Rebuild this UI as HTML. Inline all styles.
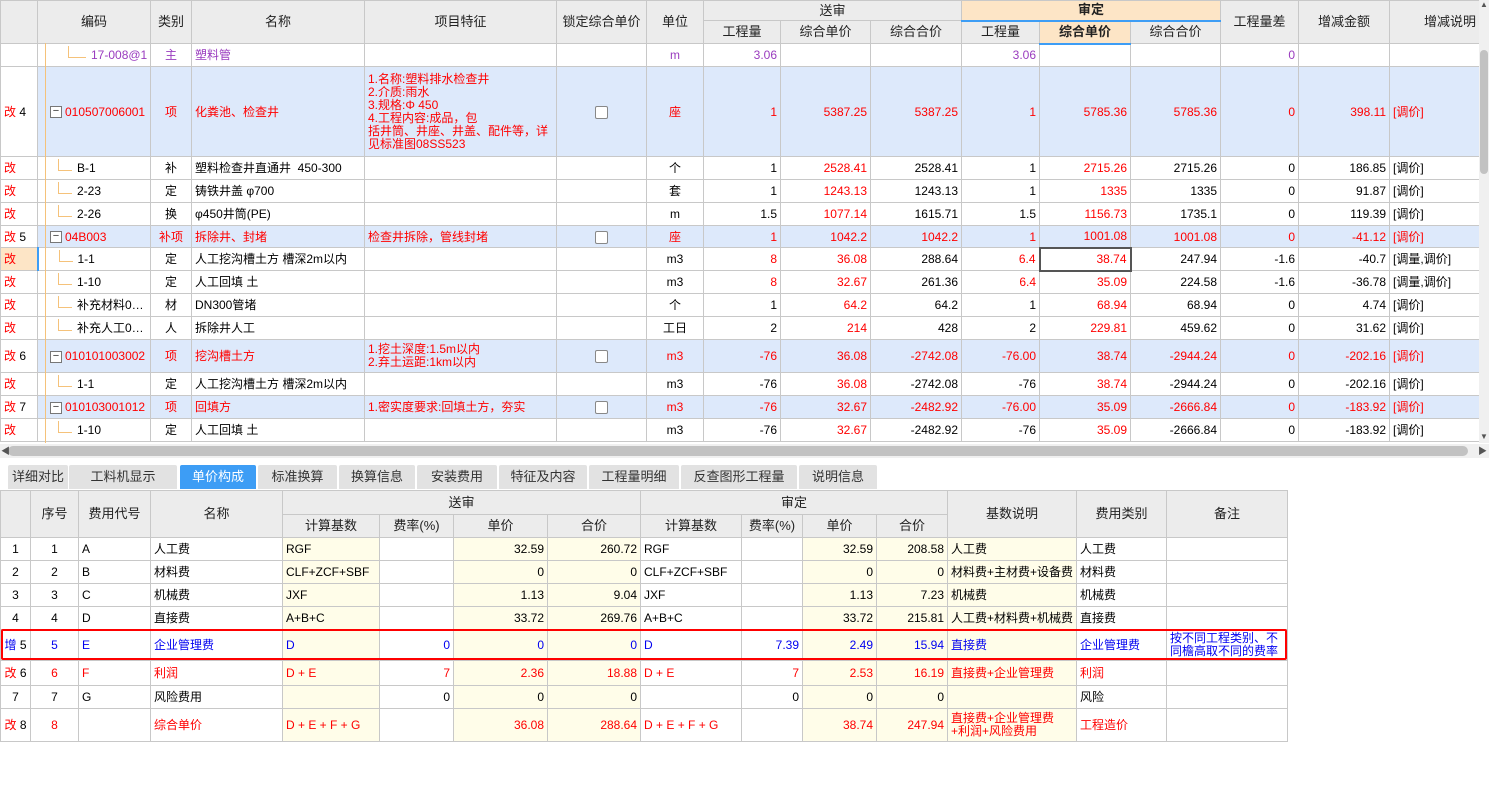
<!DOCTYPE html>
<html><head><meta charset="utf-8"><style>
*{box-sizing:border-box;margin:0;padding:0}
body{width:1489px;height:807px;background:#fff;font-family:"Liberation Sans","Noto Sans CJK SC",sans-serif;font-size:12px;color:#000;position:relative;overflow:hidden}
table{border-collapse:collapse;table-layout:fixed;position:absolute;left:0}
td{border:1px solid #c8c8c8;white-space:nowrap;overflow:hidden;padding:0 3px;line-height:14px}
.h td{background:#ececec;text-align:center;color:#222;font-size:13px}
.r{text-align:right}.c{text-align:center}
.red{color:#f00}.pur{color:#9a3cbf}.blu{color:#0000f0}
.sel td{background:#dde9fb}
.sel td.w{background:#fff}
.mn{display:inline-block;width:12px;height:12px;border:1px solid #777;line-height:9px;text-align:center;font-size:11px;color:#333;background:#fff;vertical-align:middle;margin-right:3px;margin-left:9px}
.cb{display:inline-block;width:13px;height:13px;border:1px solid #888;border-radius:2px;background:#fff;vertical-align:middle}
.ml{white-space:normal;line-height:13px;font-size:12px}
.y{background:#fffde9}
.tab{position:absolute;top:465px;height:24px;background:#e2e2e2;color:#333;font-size:13px;text-align:center;line-height:24px;border-radius:2px 2px 0 0}
.t{display:inline-block;width:14px;height:12px;border-left:1px solid #f5c27a;border-bottom:1px solid #f5c27a;vertical-align:top;margin:-2px 5px 0 17px}
.tp{margin-left:27px;width:18px}
</style></head><body>

<table style="top:0;width:1479px">
<colgroup><col style="width:37px"><col style="width:113px"><col style="width:41px"><col style="width:173px"><col style="width:192px"><col style="width:90px"><col style="width:57px"><col style="width:77px"><col style="width:90px"><col style="width:91px"><col style="width:78px"><col style="width:91px"><col style="width:90px"><col style="width:78px"><col style="width:91px"><col style="width:90px"></colgroup>
<tr class="h" style="height:20px"><td rowspan="2"></td><td rowspan="2">编码</td><td rowspan="2">类别</td><td rowspan="2">名称</td><td rowspan="2">项目特征</td><td rowspan="2">锁定综合单价</td><td rowspan="2">单位</td><td colspan="3">送审</td><td colspan="3" style="background:#fde5c6;font-weight:bold;border-bottom:2px solid #3d9df5">审定</td><td rowspan="2">工程量差</td><td rowspan="2">增减金额</td><td rowspan="2" style="text-align:right">增减说明</td></tr>
<tr class="h" style="height:23px"><td>工程量</td><td>综合单价</td><td>综合合价</td><td>工程量</td><td style="background:#fde5c6;font-weight:bold;border-bottom:2px solid #3d9df5">综合单价</td><td>综合合价</td></tr>
<tr style="height:23px" class="pur"><td></td><td><span class="t tp"></span>17-008@1</td><td class="c">主</td><td>塑料管</td><td></td><td></td><td class="c">m</td><td class="r">3.06</td><td></td><td></td><td class="r">3.06</td><td></td><td></td><td class="r">0</td><td></td><td></td></tr>
<tr style="height:90px" class="sel red"><td class="w">改 <span style="color:#000">4</span></td><td><span class="mn">−</span>010507006001</td><td class="c">项</td><td>化粪池、检查井</td><td class="ml">1.名称:塑料排水检查井<br>2.介质:雨水<br>3.规格:Φ 450<br>4.工程内容:成品，包<br>括井筒、井座、井盖、配件等，详<br>见标准图08SS523</td><td class="c"><span class="cb"></span></td><td class="c">座</td><td class="r">1</td><td class="r">5387.25</td><td class="r">5387.25</td><td class="r">1</td><td class="r">5785.36</td><td class="r">5785.36</td><td class="r">0</td><td class="r">398.11</td><td>[调价]</td></tr>
<tr style="height:23px"><td class="red">改</td><td><span class="t"></span>B-1</td><td class="c">补</td><td>塑料检查井直通井&nbsp; 450-300</td><td></td><td></td><td class="c">个</td><td class="r">1</td><td class="r red">2528.41</td><td class="r">2528.41</td><td class="r">1</td><td class="r red">2715.26</td><td class="r">2715.26</td><td class="r">0</td><td class="r">186.85</td><td>[调价]</td></tr>
<tr style="height:23px"><td class="red">改</td><td><span class="t"></span>2-23</td><td class="c">定</td><td>铸铁井盖 φ700</td><td></td><td></td><td class="c">套</td><td class="r">1</td><td class="r red">1243.13</td><td class="r">1243.13</td><td class="r">1</td><td class="r red">1335</td><td class="r">1335</td><td class="r">0</td><td class="r">91.87</td><td>[调价]</td></tr>
<tr style="height:23px"><td class="red">改</td><td><span class="t"></span>2-26</td><td class="c">换</td><td>φ450井筒(PE)</td><td></td><td></td><td class="c">m</td><td class="r">1.5</td><td class="r red">1077.14</td><td class="r">1615.71</td><td class="r">1.5</td><td class="r red">1156.73</td><td class="r">1735.1</td><td class="r">0</td><td class="r">119.39</td><td>[调价]</td></tr>
<tr style="height:22px" class="sel red"><td class="w">改 <span style="color:#000">5</span></td><td><span class="mn">−</span>04B003</td><td class="c">补项</td><td>拆除井、封堵</td><td>检查井拆除，管线封堵</td><td class="c"><span class="cb"></span></td><td class="c">座</td><td class="r">1</td><td class="r">1042.2</td><td class="r">1042.2</td><td class="r">1</td><td class="r">1001.08</td><td class="r">1001.08</td><td class="r">0</td><td class="r">-41.12</td><td>[调价]</td></tr>
<tr style="height:23px"><td class="red" style="background:#fde5c6;border-right:2px solid #3d9df5">改</td><td><span class="t"></span>1-1</td><td class="c">定</td><td>人工挖沟槽土方 槽深2m以内</td><td></td><td></td><td class="c">m3</td><td class="r red">8</td><td class="r red">36.08</td><td class="r">288.64</td><td class="r red">6.4</td><td class="r red" style="border:2px solid #555">38.74</td><td class="r">247.94</td><td class="r">-1.6</td><td class="r">-40.7</td><td>[调量,调价]</td></tr>
<tr style="height:23px"><td class="red">改</td><td><span class="t"></span>1-10</td><td class="c">定</td><td>人工回填 土</td><td></td><td></td><td class="c">m3</td><td class="r red">8</td><td class="r red">32.67</td><td class="r">261.36</td><td class="r red">6.4</td><td class="r red">35.09</td><td class="r">224.58</td><td class="r">-1.6</td><td class="r">-36.78</td><td>[调量,调价]</td></tr>
<tr style="height:23px"><td class="red">改</td><td><span class="t"></span>补充材料0…</td><td class="c">材</td><td>DN300管堵</td><td></td><td></td><td class="c">个</td><td class="r">1</td><td class="r red">64.2</td><td class="r">64.2</td><td class="r">1</td><td class="r red">68.94</td><td class="r">68.94</td><td class="r">0</td><td class="r">4.74</td><td>[调价]</td></tr>
<tr style="height:23px"><td class="red">改</td><td><span class="t"></span>补充人工0…</td><td class="c">人</td><td>拆除井人工</td><td></td><td></td><td class="c">工日</td><td class="r">2</td><td class="r red">214</td><td class="r">428</td><td class="r">2</td><td class="r red">229.81</td><td class="r">459.62</td><td class="r">0</td><td class="r">31.62</td><td>[调价]</td></tr>
<tr style="height:33px" class="sel red"><td class="w">改 <span style="color:#000">6</span></td><td><span class="mn">−</span>010101003002</td><td class="c">项</td><td>挖沟槽土方</td><td class="ml">1.挖土深度:1.5m以内<br>2.弃土运距:1km以内</td><td class="c"><span class="cb"></span></td><td class="c">m3</td><td class="r">-76</td><td class="r">36.08</td><td class="r">-2742.08</td><td class="r">-76.00</td><td class="r">38.74</td><td class="r">-2944.24</td><td class="r">0</td><td class="r">-202.16</td><td>[调价]</td></tr>
<tr style="height:23px"><td class="red">改</td><td><span class="t"></span>1-1</td><td class="c">定</td><td>人工挖沟槽土方 槽深2m以内</td><td></td><td></td><td class="c">m3</td><td class="r">-76</td><td class="r red">36.08</td><td class="r">-2742.08</td><td class="r">-76</td><td class="r red">38.74</td><td class="r">-2944.24</td><td class="r">0</td><td class="r">-202.16</td><td>[调价]</td></tr>
<tr style="height:23px" class="sel red"><td class="w">改 <span style="color:#000">7</span></td><td><span class="mn">−</span>010103001012</td><td class="c">项</td><td>回填方</td><td>1.密实度要求:回填土方，夯实</td><td class="c"><span class="cb"></span></td><td class="c">m3</td><td class="r">-76</td><td class="r">32.67</td><td class="r">-2482.92</td><td class="r">-76.00</td><td class="r">35.09</td><td class="r">-2666.84</td><td class="r">0</td><td class="r">-183.92</td><td>[调价]</td></tr>
<tr style="height:23px"><td class="red">改</td><td><span class="t"></span>1-10</td><td class="c">定</td><td>人工回填 土</td><td></td><td></td><td class="c">m3</td><td class="r">-76</td><td class="r red">32.67</td><td class="r">-2482.92</td><td class="r">-76</td><td class="r red">35.09</td><td class="r">-2666.84</td><td class="r">0</td><td class="r">-183.92</td><td>[调价]</td></tr>
</table>
<div style="position:absolute;left:45px;top:43px;width:1px;height:400px;background:#f5c27a"></div>
<div style="position:absolute;left:1479px;top:0;width:10px;height:443px;background:#f0f0f0"></div>
<div style="position:absolute;left:1480px;top:50px;width:8px;height:124px;background:#c2c2c2;border-radius:4px"></div>
<div style="position:absolute;left:1480px;top:0;font-size:8px;color:#555">▲</div>
<div style="position:absolute;left:1480px;top:432px;font-size:8px;color:#555">▼</div>
<div style="position:absolute;left:0;top:444px;width:1489px;height:14px;background:#f0f0f0"></div>
<div style="position:absolute;left:8px;top:446px;width:1460px;height:10px;background:#c2c2c2;border-radius:5px"></div>
<div style="position:absolute;left:1px;top:444px;font-size:9px;color:#555">◀</div>
<div style="position:absolute;left:1478px;top:444px;font-size:9px;color:#555">▶</div>

<div class="tab" style="left:8px;width:60px">详细对比</div>
<div class="tab" style="left:69px;width:108px">工料机显示</div>
<div class="tab" style="left:180px;width:76px;background:#3d9df5;color:#fff">单价构成</div>
<div class="tab" style="left:258px;width:79px">标准换算</div>
<div class="tab" style="left:339px;width:76px">换算信息</div>
<div class="tab" style="left:417px;width:80px">安装费用</div>
<div class="tab" style="left:499px;width:88px">特征及内容</div>
<div class="tab" style="left:589px;width:90px">工程量明细</div>
<div class="tab" style="left:681px;width:116px">反查图形工程量</div>
<div class="tab" style="left:799px;width:78px">说明信息</div>

<table style="top:490px;width:1287px">
<colgroup><col style="width:30px"><col style="width:48px"><col style="width:72px"><col style="width:132px"><col style="width:97px"><col style="width:74px"><col style="width:94px"><col style="width:93px"><col style="width:101px"><col style="width:61px"><col style="width:74px"><col style="width:71px"><col style="width:129px"><col style="width:90px"><col style="width:121px"></colgroup>
<tr class="h" style="height:24px"><td rowspan="2"></td><td rowspan="2">序号</td><td rowspan="2">费用代号</td><td rowspan="2">名称</td><td colspan="4">送审</td><td colspan="4">审定</td><td rowspan="2">基数说明</td><td rowspan="2">费用类别</td><td rowspan="2">备注</td></tr>
<tr class="h" style="height:23px"><td>计算基数</td><td>费率(%)</td><td>单价</td><td>合价</td><td>计算基数</td><td>费率(%)</td><td>单价</td><td>合价</td></tr>
<tr style="height:23px"><td class="c">1</td><td class="c">1</td><td>A</td><td>人工费</td><td class="y">RGF</td><td></td><td class="r y">32.59</td><td class="r y">260.72</td><td>RGF</td><td></td><td class="r y">32.59</td><td class="r y">208.58</td><td class="y">人工费</td><td>人工费</td><td></td></tr>
<tr style="height:23px"><td class="c">2</td><td class="c">2</td><td>B</td><td>材料费</td><td class="y">CLF+ZCF+SBF</td><td></td><td class="r y">0</td><td class="r y">0</td><td>CLF+ZCF+SBF</td><td></td><td class="r y">0</td><td class="r y">0</td><td class="y">材料费+主材费+设备费</td><td>材料费</td><td></td></tr>
<tr style="height:23px"><td class="c">3</td><td class="c">3</td><td>C</td><td>机械费</td><td class="y">JXF</td><td></td><td class="r y">1.13</td><td class="r y">9.04</td><td>JXF</td><td></td><td class="r y">1.13</td><td class="r y">7.23</td><td class="y">机械费</td><td>机械费</td><td></td></tr>
<tr style="height:23px"><td class="c">4</td><td class="c">4</td><td>D</td><td>直接费</td><td class="y">A+B+C</td><td></td><td class="r y">33.72</td><td class="r y">269.76</td><td>A+B+C</td><td></td><td class="r y">33.72</td><td class="r y">215.81</td><td class="y">人工费+材料费+机械费</td><td>直接费</td><td></td></tr>
<tr style="height:31px" class="blu"><td class="c">增 <span style="color:#000">5</span></td><td class="c">5</td><td>E</td><td>企业管理费</td><td class="y">D</td><td class="r">0</td><td class="r y">0</td><td class="r y">0</td><td>D</td><td class="r">7.39</td><td class="r y">2.49</td><td class="r y">15.94</td><td class="y">直接费</td><td>企业管理费</td><td class="ml">按不同工程类别、不同檐高取不同的费率</td></tr>
<tr style="height:25px" class="red"><td class="c">改 <span style="color:#000">6</span></td><td class="c">6</td><td>F</td><td>利润</td><td class="y">D + E</td><td class="r">7</td><td class="r y">2.36</td><td class="r y">18.88</td><td>D + E</td><td class="r">7</td><td class="r y">2.53</td><td class="r y">16.19</td><td class="y">直接费+企业管理费</td><td>利润</td><td></td></tr>
<tr style="height:23px"><td class="c">7</td><td class="c">7</td><td>G</td><td>风险费用</td><td class="y"></td><td class="r">0</td><td class="r y">0</td><td class="r y">0</td><td></td><td class="r">0</td><td class="r y">0</td><td class="r y">0</td><td class="y"></td><td>风险</td><td></td></tr>
<tr style="height:33px" class="red"><td class="c">改 <span style="color:#000">8</span></td><td class="c">8</td><td></td><td>综合单价</td><td class="y">D + E + F + G</td><td></td><td class="r y">36.08</td><td class="r y">288.64</td><td>D + E + F + G</td><td></td><td class="r y">38.74</td><td class="r y">247.94</td><td class="y ml">直接费+企业管理费+利润+风险费用</td><td>工程造价</td><td></td></tr>
</table>
<div style="position:absolute;left:1px;top:629px;width:1286px;height:31px;border:2px solid #f00;border-radius:2px"></div>
</body></html>
